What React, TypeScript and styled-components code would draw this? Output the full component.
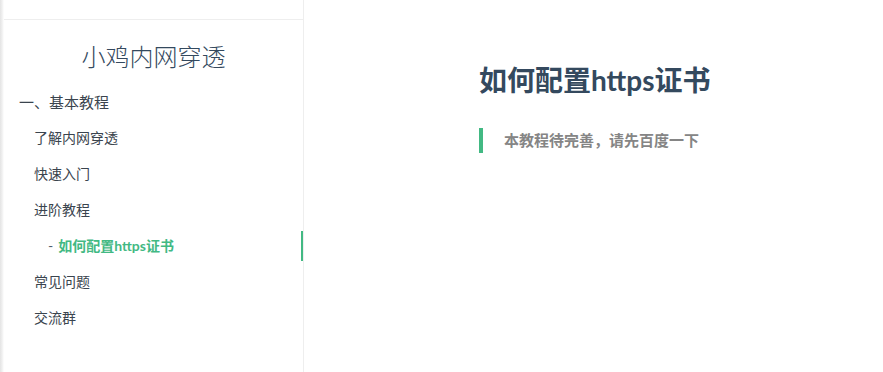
import React from "react";
import styled, { createGlobalStyle } from "styled-components";

const Global = createGlobalStyle`
  html, body { margin: 0; padding: 0; background: #fff; }
  body {
    font-family: "Lato", "Noto Sans CJK SC", "Noto Sans", sans-serif;
    -webkit-font-smoothing: antialiased;
  }
`;

const Page = styled.div`
  display: flex;
  height: 372px;
  overflow: hidden;
`;

const Sidebar = styled.aside`
  box-sizing: border-box;
  width: 304px;
  flex: none;
  padding-left: 4px;
  border-right: 1px solid #eee;
  background: linear-gradient(to right, #e4e4e4 0, #efefef 2px, #f7f7f7 3px, #fff 4px);
  display: flex;
  flex-direction: column;
`;

const SearchBar = styled.div`
  height: 19px;
  border-bottom: 1px solid #eee;
  flex: none;
`;

const AppName = styled.h1`
  margin: 20px 0 12px;
  height: 32px;
  line-height: 32px;
  text-align: center;
  font-size: 24px;
  font-weight: 300;
  color: #34495e;
  font-family: "Noto Sans CJK SC", sans-serif;
`;

const NavList = styled.ul`
  list-style: none;
  margin: 0;
  padding: 0;
`;

const NavItem = styled.li<{ $level: number; $active?: boolean }>`
  position: relative;
  height: 36px;
  line-height: 36px;
  padding-left: ${(p) => (p.$level === 0 ? 15 : p.$level === 1 ? 30 : 44)}px;
  font-size: ${(p) => (p.$level === 0 ? 15 : 14)}px;
  font-weight: ${(p) => (p.$active ? 700 : 400)};
  color: ${(p) => (p.$active ? "#42b983" : "#3a444e")};
  font-family: "Lato", "Noto Sans CJK SC", sans-serif;
  white-space: nowrap;
  ${(p) =>
    p.$active &&
    `
    &::after {
      content: "";
      position: absolute;
      right: 0;
      top: 3px;
      width: 2px;
      height: 30px;
      background: #42b983;
    }
  `}
`;

const Dash = styled.span`
  color: #505d6b;
  font-weight: 400;
  margin-right: 5px;
`;

const Main = styled.main`
  flex: 1;
  padding: 58px 0 0 175px;
  box-sizing: border-box;
`;

const Title = styled.h1`
  margin: 0;
  height: 44px;
  line-height: 44px;
  font-size: 28px;
  font-weight: 700;
  color: #34495e;
  font-family: "Lato", "Noto Sans CJK SC", sans-serif;
`;

const Quote = styled.blockquote`
  margin: 26px 0 0;
  border-left: 4px solid #42b983;
  padding-left: 21px;
  height: 25px;
  line-height: 25px;
  font-size: 15px;
  font-weight: 700;
  color: #858585;
  font-family: "Lato", "Noto Sans CJK SC", sans-serif;
`;

export default function App() {
  return (
    <>
      <Global />
      <Page>
        <Sidebar>
          <SearchBar />
          <AppName>小鸡内网穿透</AppName>
          <NavList>
            <NavItem $level={0}>一、基本教程</NavItem>
            <NavItem $level={1}>了解内网穿透</NavItem>
            <NavItem $level={1}>快速入门</NavItem>
            <NavItem $level={1}>进阶教程</NavItem>
            <NavItem $level={2} $active>
              <Dash>-</Dash>如何配置https证书
            </NavItem>
            <NavItem $level={1}>常见问题</NavItem>
            <NavItem $level={1}>交流群</NavItem>
          </NavList>
        </Sidebar>
        <Main>
          <Title>如何配置https证书</Title>
          <Quote>本教程待完善，请先百度一下</Quote>
        </Main>
      </Page>
    </>
  );
}
